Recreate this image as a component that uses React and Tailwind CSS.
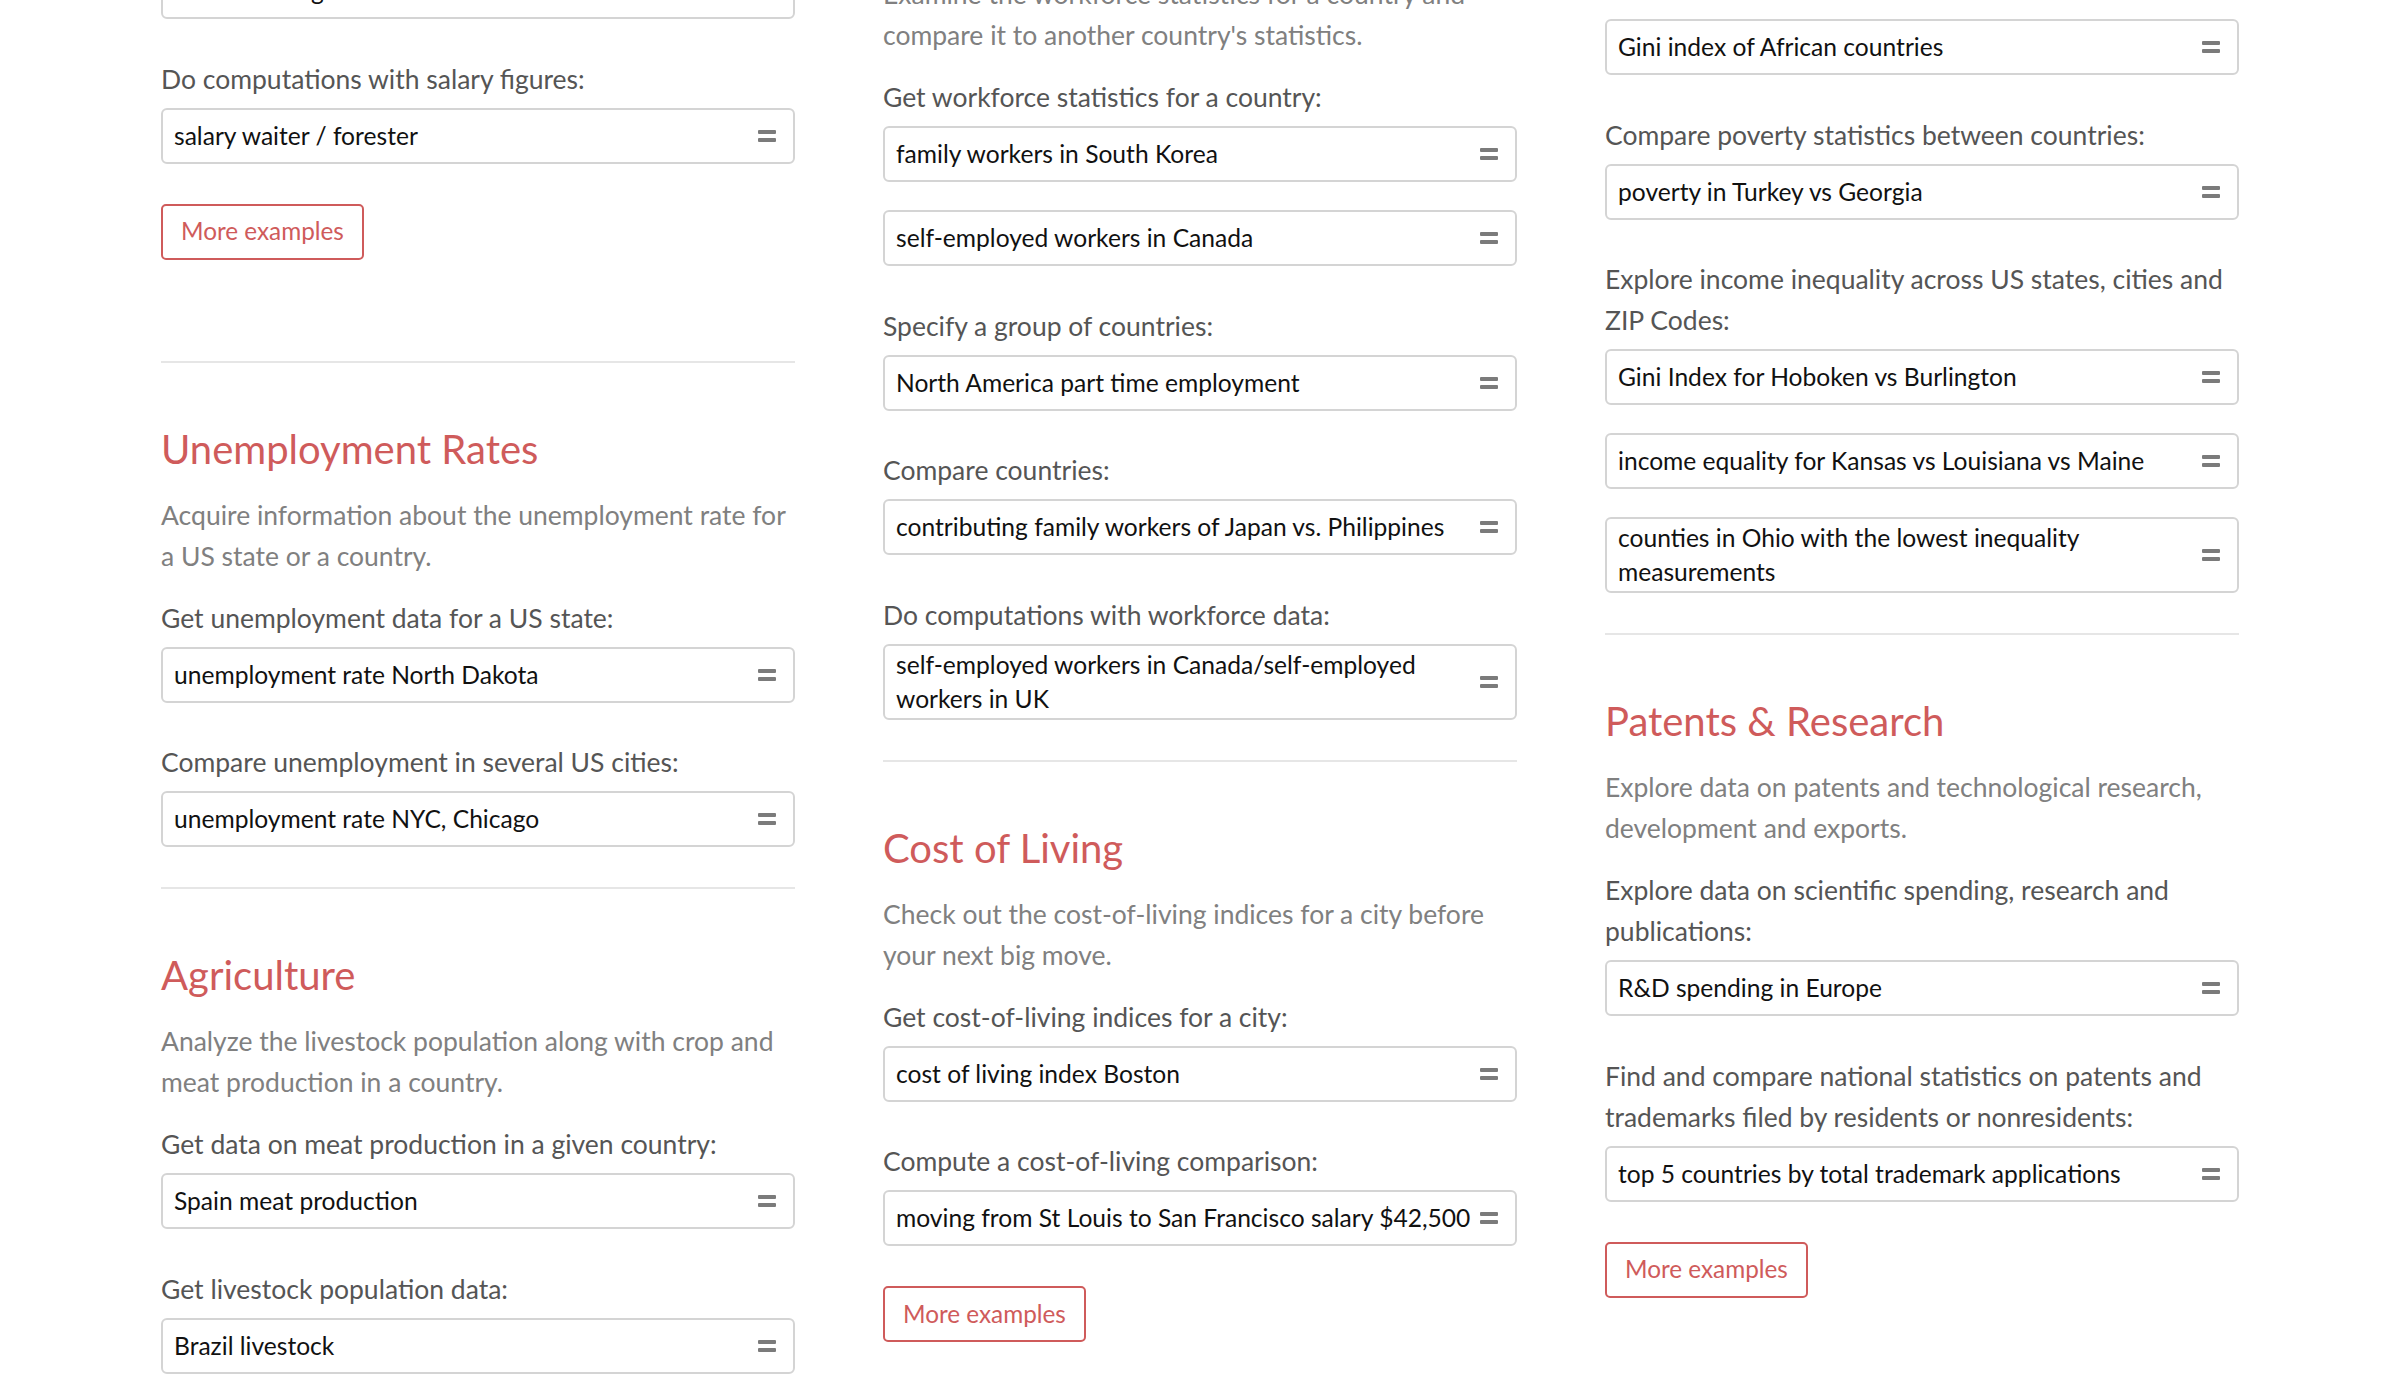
import React from 'react';

const font = { fontFamily: 'Lato, "Open Sans", sans-serif' };

const EqualsIcon = () => (
  <div className="flex flex-col gap-[4px] shrink-0">
    <span className="block w-[18px] h-[4px] bg-[#7b7b7b] rounded-[1px]" />
    <span className="block w-[18px] h-[4px] bg-[#7b7b7b] rounded-[1px]" />
  </div>
);

const Lines = ({ lines }) =>
  lines.map((line, i) => (
    <span key={i} className="block whitespace-nowrap">
      {line}
    </span>
  ));

const Query = ({ text }) => {
  const lines = Array.isArray(text) ? text : [text];
  return (
    <div className="flex items-center justify-between gap-[6px] min-h-[56px] py-[2px] pl-[11px] pr-[17px] border-2 border-[#d4d4d4] rounded-[6px] bg-white">
      <div className="min-w-0 text-[24.6px] leading-[34px] text-[#111]">
        <Lines lines={lines} />
      </div>
      <EqualsIcon />
    </div>
  );
};

const Label = ({ text }) => {
  const lines = Array.isArray(text) ? text : [text];
  return (
    <div className="text-[26.5px] leading-[41px] text-[#555] mb-2">
      <Lines lines={lines} />
    </div>
  );
};

// spacing above a group: none at the top of a column, 21px after a description, 39.5px between groups
const Group = ({ label, queries, spacing }) => (
  <div className={spacing}>
    {label && <Label text={label} />}
    <div className="flex flex-col gap-[28px]">
      {queries.map((q, i) => (
        <Query key={i} text={q} />
      ))}
    </div>
  </div>
);

const MoreButton = () => (
  <button className="mt-10 self-start h-[56px] px-[18px] border-2 border-[#cf5b5b] rounded-[5px] text-[24.3px] text-[#cf5b5b] bg-white">
    More examples
  </button>
);

const Divider = () => <div className="h-[2px] bg-[#e6e6e6]" />;

const Section = ({ title, desc, groups, more }) => (
  <div className={`flex flex-col ${more ? 'pb-[101px]' : 'pb-10'}`}>
    {title && (
      <h2 className="mt-[62px] text-[40px] leading-[48px] text-[#cf5b5b]">{title}</h2>
    )}
    {desc && (
      <div className={`${title ? 'mt-[22px]' : ''} text-[26.5px] leading-[41px] text-[#808080]`}>
        <Lines lines={desc} />
      </div>
    )}
    {groups.map((g, i) => (
      <Group
        key={i}
        {...g}
        spacing={i > 0 ? 'mt-[39.5px]' : desc ? 'mt-[21px]' : ''}
      />
    ))}
    {more && <MoreButton />}
  </div>
);

const Column = ({ sections, offset }) => (
  <div className={`flex flex-col ${offset}`}>
    {sections.map((s, i) => (
      <React.Fragment key={i}>
        {i > 0 && <Divider />}
        <Section {...s} />
      </React.Fragment>
    ))}
  </div>
);

const col1 = [
  {
    groups: [
      { queries: ['minimum wage in Texas'] },
      { label: 'Do computations with salary figures:', queries: ['salary waiter / forester'] },
    ],
    more: true,
  },
  {
    title: 'Unemployment Rates',
    desc: ['Acquire information about the unemployment rate for', 'a US state or a country.'],
    groups: [
      { label: 'Get unemployment data for a US state:', queries: ['unemployment rate North Dakota'] },
      { label: 'Compare unemployment in several US cities:', queries: ['unemployment rate NYC, Chicago'] },
    ],
  },
  {
    title: 'Agriculture',
    desc: ['Analyze the livestock population along with crop and', 'meat production in a country.'],
    groups: [
      { label: 'Get data on meat production in a given country:', queries: ['Spain meat production'] },
      { label: 'Get livestock population data:', queries: ['Brazil livestock'] },
    ],
  },
];

const col2 = [
  {
    desc: ['Examine the workforce statistics for a country and', "compare it to another country's statistics."],
    groups: [
      {
        label: 'Get workforce statistics for a country:',
        queries: ['family workers in South Korea', 'self-employed workers in Canada'],
      },
      { label: 'Specify a group of countries:', queries: ['North America part time employment'] },
      { label: 'Compare countries:', queries: ['contributing family workers of Japan vs. Philippines'] },
      {
        label: 'Do computations with workforce data:',
        queries: [['self-employed workers in Canada/self-employed', 'workers in UK']],
      },
    ],
  },
  {
    title: 'Cost of Living',
    desc: ['Check out the cost-of-living indices for a city before', 'your next big move.'],
    groups: [
      { label: 'Get cost-of-living indices for a city:', queries: ['cost of living index Boston'] },
      {
        label: 'Compute a cost-of-living comparison:',
        queries: ['moving from St Louis to San Francisco salary $42,500'],
      },
    ],
    more: true,
  },
];

const col3 = [
  {
    groups: [
      { queries: ['Gini index of African countries'] },
      { label: 'Compare poverty statistics between countries:', queries: ['poverty in Turkey vs Georgia'] },
      {
        label: ['Explore income inequality across US states, cities and', 'ZIP Codes:'],
        queries: [
          'Gini Index for Hoboken vs Burlington',
          'income equality for Kansas vs Louisiana vs Maine',
          ['counties in Ohio with the lowest inequality', 'measurements'],
        ],
      },
    ],
  },
  {
    title: 'Patents & Research',
    desc: ['Explore data on patents and technological research,', 'development and exports.'],
    groups: [
      {
        label: ['Explore data on scientific spending, research and', 'publications:'],
        queries: ['R&D spending in Europe'],
      },
      {
        label: ['Find and compare national statistics on patents and', 'trademarks filed by residents or nonresidents:'],
        queries: ['top 5 countries by total trademark applications'],
      },
    ],
    more: true,
  },
];

export default function App() {
  return (
    <div className="h-[1398px] overflow-hidden bg-white" style={font}>
      <div className="w-[2078px] mx-auto grid grid-cols-3 gap-x-[88px] items-start">
        <Column sections={col1} offset="-mt-[37px]" />
        <Column sections={col2} offset="-mt-[26px]" />
        <Column sections={col3} offset="mt-[19px]" />
      </div>
    </div>
  );
}
